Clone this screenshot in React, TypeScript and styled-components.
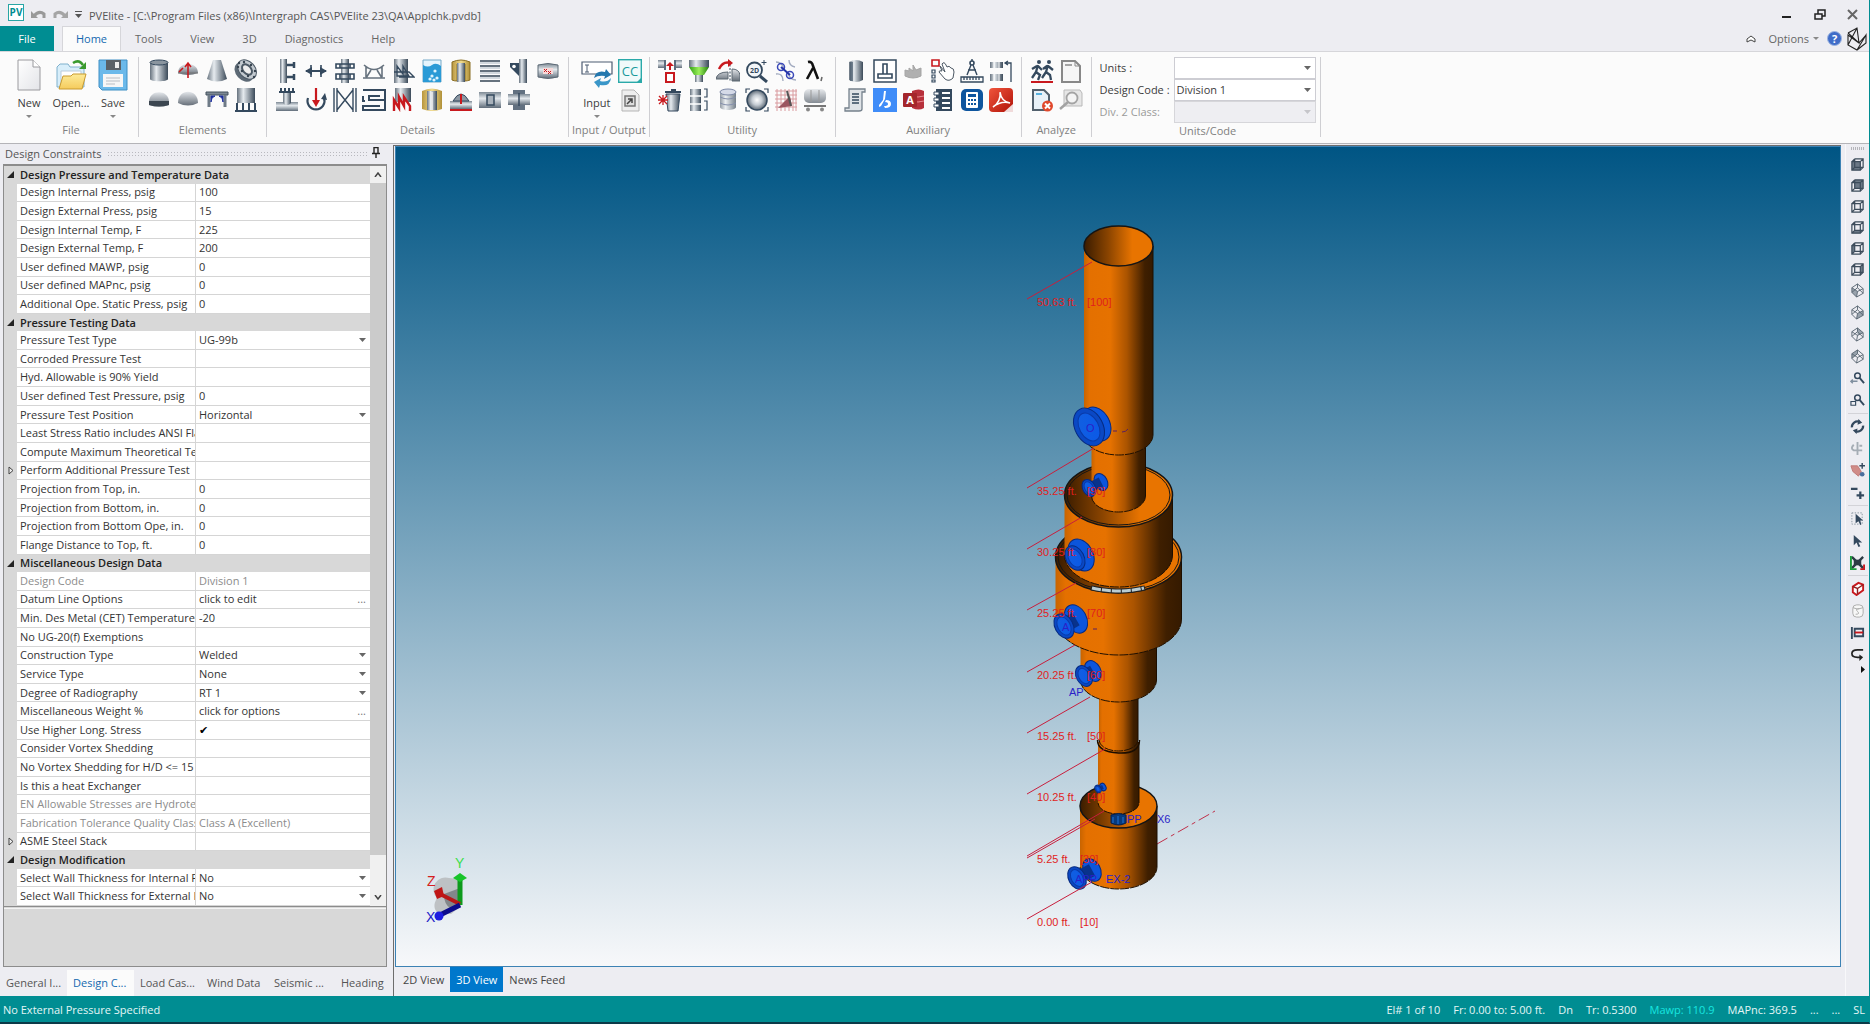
import React from "react";
import styled, { createGlobalStyle, css } from "styled-components";

const SLATE = "#34495e";
const RED = "#c8191e";
const TEAL = "#008d92";

const GlobalStyle = createGlobalStyle`
  *, *::before, *::after { box-sizing: border-box; }
  html, body, #root { height: 100%; margin: 0; }
  body { background: #ededf2; overflow: hidden; }
  body, button, input, select {
    font-family: "Open Sans", "Noto Sans", sans-serif;
    font-size: 11px;
    line-height: 16px;
    color: #3c3c3c;
  }
  button, select, input { border: 0; padding: 0; margin: 0; background: none; }
  svg { display: block; flex: none; }
`;

/* ---------- frame ---------- */

const Window = styled.div`
  display: flex;
  flex-direction: column;
  height: 100%;
  border-right: 1px solid ${TEAL};
  border-bottom: 2px solid #0c3a48;
`;

const TitleBar = styled.header`
  display: flex;
  align-items: center;
  height: 26px;
  padding: 6px 10px 0 8px;
  gap: 7px;
`;

const Logo = styled.span`
  width: 16px;
  height: 17px;
  border: 1px solid #28a5a5;
  background: #fff;
  color: #008d92;
  font-size: 10px;
  font-weight: 700;
  line-height: 14px;
  text-align: center;
  margin-top: -8px;
`;

const QuickButton = styled.button`
  display: flex;
  margin-top: -4px;
`;

const Title = styled.h1`
  flex: 1;
  margin: 0;
  font-size: 11px;
  font-weight: 400;
  color: #555;
  white-space: nowrap;
`;

const WindowButtons = styled.div`
  display: flex;
  gap: 21px;
`;

const TabBar = styled.nav`
  display: flex;
  align-items: stretch;
  height: 25px;
  padding-right: 1px;
`;

const MenuTab = styled.button<{ $kind?: "file" | "active" }>`
  height: 25px;
  padding: 1px 14px 0;
  color: #666;
  ${p => p.$kind === "file" && css`
    width: 54px;
    margin-right: 8px;
    background: ${TEAL};
    color: #fff;
  `}
  ${p => p.$kind === "active" && css`
    width: 59px;
    padding: 0 12px;
    background: #fbfbfb;
    border: 1px solid #d6d6da;
    border-bottom: 0;
    color: #1369b0;
  `}
`;

const TabBarEnd = styled.div`
  display: flex;
  align-items: center;
  gap: 8px;
  margin-left: auto;
`;

const EndButton = styled.button<{ $wide?: boolean }>`
  display: flex;
  align-items: center;
  gap: 4px;
  color: #666;
  ${p => p.$wide && css`padding-left: 4px;`}
`;

/* ---------- ribbon ---------- */

const Ribbon = styled.div`
  display: flex;
  height: 93px;
  padding: 5px 0 6px;
  background: #fbfbfb;
  border-top: 1px solid #d6d6da;
  border-bottom: 1px solid #b4b4b8;
`;

const Group = styled.section<{ $pad?: string }>`
  display: flex;
  flex-direction: column;
  justify-content: space-between;
  padding: ${p => p.$pad ?? "0 8px"};
  border-right: 1px solid #cfcfd3;
`;

const GroupBody = styled.div`
  display: flex;
  padding-top: 2px;
  justify-content: center;
`;

const GroupLabel = styled.h2`
  margin: 0;
  font-size: 11px;
  font-weight: 400;
  line-height: 15px;
  color: #808080;
  text-align: center;
  white-space: nowrap;
`;

const IconGrid = styled.div<{ $cols: number }>`
  display: grid;
  grid-template-columns: repeat(${p => p.$cols}, 24px);
  grid-auto-rows: 24px;
  gap: 5px;
`;

const IconButton = styled.button`
  display: flex;
  width: 24px;
  height: 24px;
`;

const BigButton = styled.button`
  display: flex;
  flex-direction: column;
  align-items: center;
  width: 42px;
  gap: 4px;
`;

const CodeForm = styled.div`
  display: grid;
  grid-template-columns: 74px 142px;
  grid-auto-rows: 22px;
  align-items: center;
`;

const CodeLabel = styled.label<{ $off?: boolean }>`
  color: ${p => (p.$off ? "#9a9a9a" : "#3c3c3c")};
`;

const SelectBox = styled.span<{ $framed?: boolean; $off?: boolean }>`
  display: grid;
  align-items: center;
  ${p => p.$framed && css`
    height: 22px;
    border: 1px solid #cdcdd3;
    background: ${p.$off ? "#ececf1" : "#fff"};
    padding-left: 2px;
    opacity: ${p.$off ? 0.8 : 1};
  `}
  & > * { grid-area: 1 / 1; }
  & > svg { justify-self: end; margin-right: 4px; pointer-events: none; }
`;

const Select = styled.select`
  appearance: none;
  width: 100%;
  height: 16px;
  color: #3c3c3c;
  opacity: 1;
`;

/* ---------- body ---------- */

const Body = styled.div`
  display: flex;
  flex: 1;
  min-height: 0;
`;

const Side = styled.aside`
  display: flex;
  flex-direction: column;
  width: 388px;
  padding-right: 1px;
`;

const SideHeader = styled.div`
  display: flex;
  align-items: center;
  height: 20px;
  gap: 5px;
  padding: 0 7px 0 5px;
`;

const SideTitle = styled.h2`
  margin: 0;
  font-size: 11px;
  font-weight: 400;
  color: #555;
`;

const Grip = styled.span`
  flex: 1;
  height: 6px;
  background-image: radial-gradient(#b9b9bf 25%, transparent 30%);
  background-size: 3px 3px;
`;

const PropertyFrame = styled.div`
  display: flex;
  flex-direction: column;
  flex: 1;
  min-height: 0;
  margin-left: 3px;
  border: 1px solid #8c8c8c;
  border-top-width: 2px;
  background: #d8d8d8;
`;

const PropertyScroll = styled.div`
  display: flex;
  flex: 1;
  min-height: 0;
  border-bottom: 1px solid #8c8c8c;
`;

const TableArea = styled.div`
  flex: 1;
  min-width: 0;
`;

const Table = styled.table`
  width: 100%;
  height: 100%;
  border-spacing: 0;
  table-layout: fixed;
`;

const GutterCol = styled.col`width: 13px;`;
const NameCol = styled.col`width: 179px;`;

const cell = css`
  padding: 0;
  line-height: 16px;
  overflow: hidden;
  white-space: nowrap;
`;

const Gutter = styled.td`
  ${cell}
  background: #d8d8d8;
  & svg { margin-left: auto; margin-right: 3px; }
`;

const SectionHead = styled.th`
  ${cell}
  padding-left: 3px;
  text-align: left;
  font-weight: 600;
  color: #222;
  background: #d8d8d8;
`;

const NameCell = styled.th<{ $off?: boolean }>`
  ${cell}
  padding-left: 3px;
  text-align: left;
  font-weight: 400;
  background: #fff;
  border-right: 1px solid #d5d5d5;
  border-bottom: 1px solid #d5d5d5;
  color: ${p => (p.$off ? "#8c8c8c" : "#333")};
`;

const ValueCell = styled.td<{ $off?: boolean }>`
  ${cell}
  padding-left: 3px;
  background: #fff;
  border-bottom: 1px solid #d5d5d5;
  & input, & select { color: ${p => (p.$off ? "#8c8c8c" : "#333")}; }
`;

const TextInput = styled.input`
  display: block;
  width: 100%;
  height: 16px;
`;

const Check = styled.input`
  appearance: none;
  display: block;
  width: 14px;
  height: 14px;
  line-height: 14px;
  &:checked::before {
    content: "✔";
    font-family: "DejaVu Sans", sans-serif;
    font-size: 11px;
    color: #000;
  }
`;

const Picker = styled.span`
  display: flex;
  justify-content: space-between;
  padding-right: 4px;
`;

const Dots = styled.button`color: #777;`;

const Scrollbar = styled.div`
  display: flex;
  flex-direction: column;
  width: 16px;
  background: #f0f0f0;
`;

const ScrollButton = styled.button`
  display: flex;
  align-items: center;
  justify-content: center;
  height: 17px;
`;

const ScrollTrack = styled.div`
  flex: 1;
  display: grid;
  grid-template-rows: 20fr 1fr;
`;

const Thumb = styled.div`background: #cbcbcb;`;

const Description = styled.div`
  height: 58px;
  margin-top: 1px;
  border-top: 1px solid #f4f4f4;
`;

const SideTabs = styled.div`
  display: flex;
  height: 29px;
  padding-top: 3px;
`;

const SideTab = styled.button<{ $active?: boolean }>`
  flex: 0 0 67px;
  height: 26px;
  padding-left: 6px;
  text-align: left;
  white-space: nowrap;
  color: ${p => (p.$active ? "#1369b0" : "#555")};
  background: ${p => (p.$active ? "#fbfbfb" : "transparent")};
  &:last-child { flex: 1 1 0; }
`;

const Main = styled.main`
  display: flex;
  flex-direction: column;
  flex: 1;
  min-width: 0;
  margin: 1px 4px 0 5px;
  border-left: 1px solid #6d6d6d;
  border-top: 1px solid #6d6d6d;
`;

const Viewport = styled.div`
  position: relative;
  display: flex;
  align-items: center;
  justify-content: center;
  flex: 1;
  min-height: 0;
  border: 1px solid #3c82b4;
  margin-left: 1px;
  background: linear-gradient(#005584, #f7f8fa);
`;

const Triad = styled.svg`
  position: absolute;
  left: 30px;
  bottom: 42px;
`;

const ViewTabs = styled.div`
  display: flex;
  height: 29px;
  padding: 0 0 4px 3px;
`;

const ViewTab = styled.button<{ $active?: boolean }>`
  padding: 0 6px;
  color: ${p => (p.$active ? "#fff" : "#444")};
  background: ${p => (p.$active ? "#0078cc" : "transparent")};
`;

const Tools = styled.div`
  display: flex;
  flex-direction: column;
  align-items: center;
  width: 24px;
  padding-top: 3px;
  border-left: 1px solid #f8f8fa;
`;

const ToolGrip = styled.span`
  width: 14px;
  height: 3px;
  margin-bottom: 4px;
  background: repeating-linear-gradient(90deg, #b5b5ba 0 1px, transparent 1px 2px);
`;

const ToolButton = styled.button`
  display: flex;
  justify-content: center;
  align-items: center;
  width: 22px;
  height: 21px;
  &:nth-of-type(n + 7) { margin-bottom: 1px; }
`;

const ToolRule = styled.hr`
  width: 20px;
  height: 1px;
  margin: 1px 0 2px;
  border: 0;
  background: #d3d3d8;
`;

const StatusBar = styled.footer`
  display: flex;
  align-items: center;
  height: 26px;
  padding: 2px 4px 0 3px;
  gap: 13px;
  background: ${TEAL};
  color: #e4f6f6;
  white-space: nowrap;
`;

const StatusMain = styled.span`flex: 1;`;
const StatusItem = styled.span<{ $accent?: boolean }>`
  color: ${p => (p.$accent ? "#17e6e0" : "inherit")};
`;

const Defs = styled.svg`position: absolute;`;

/* ---------- shared gradients ---------- */

function Gradients() {
  return (
    <Defs width="0" height="0" aria-hidden="true">
      <defs>
        <linearGradient id="steel"><stop offset="0" stopColor="#66727e" /><stop offset=".35" stopColor="#e6ebef" /><stop offset="1" stopColor="#3b4a59" /></linearGradient>
        <linearGradient id="steelV" x2="0" y2="1"><stop offset="0" stopColor="#7d8994" /><stop offset=".4" stopColor="#e4e9ed" /><stop offset="1" stopColor="#5f6c79" /></linearGradient>
        <linearGradient id="dome" x2="0" y2="1"><stop offset="0" stopColor="#e3e6ea" /><stop offset="1" stopColor="#666f79" /></linearGradient>
        <radialGradient id="ball"><stop offset="0" stopColor="#fff" /><stop offset=".5" stopColor="#c5ccd3" /><stop offset="1" stopColor="#5b6773" /></radialGradient>
        <linearGradient id="paper" x2="1" y2="1"><stop offset="0" stopColor="#fff" /><stop offset="1" stopColor="#e3e4e8" /></linearGradient>
        <linearGradient id="gold" x2="0" y2="1"><stop offset="0" stopColor="#fdeb9a" /><stop offset="1" stopColor="#f5cb5c" /></linearGradient>
        <linearGradient id="brass"><stop offset="0" stopColor="#b8963f" /><stop offset=".5" stopColor="#f2dc8e" /><stop offset="1" stopColor="#b09038" /></linearGradient>
        <linearGradient id="green"><stop offset="0" stopColor="#2f9e14" /><stop offset=".5" stopColor="#9cf05a" /><stop offset="1" stopColor="#237d10" /></linearGradient>
        <linearGradient id="redPdf" x2="1" y2="1"><stop offset="0" stopColor="#f0553c" /><stop offset="1" stopColor="#b01208" /></linearGradient>
        <linearGradient id="shell"><stop offset="0" stopColor="#c86400" /><stop offset=".08" stopColor="#e47000" /><stop offset=".38" stopColor="#e67200" /><stop offset=".62" stopColor="#ab5400" /><stop offset=".88" stopColor="#3f1f00" /><stop offset="1" stopColor="#351a00" /></linearGradient>
        <linearGradient id="bore"><stop offset="0" stopColor="#3a1c00" /><stop offset=".35" stopColor="#8a4400" /><stop offset=".7" stopColor="#e87400" /><stop offset="1" stopColor="#e87400" /></linearGradient>
        <linearGradient id="flange" x2="1" y2="1"><stop offset="0" stopColor="#1260e0" /><stop offset="1" stopColor="#0a58e8" /></linearGradient>
      </defs>
    </Defs>
  );
}

/* ---------- ribbon icons (24 x 24) ---------- */

const S = { fill: "none", stroke: SLATE, strokeWidth: 1.6 };
const tag = { fontFamily: "Open Sans, sans-serif" };

const ICONS: Record<string, React.ReactNode> = {
  Cylinder: <><path d="M3 4v16c0 3 18 3 18 0V4z" fill="url(#steel)" /><ellipse cx="12" cy="3.5" rx="9" ry="2.5" fill="#8a959f" stroke={SLATE} /></>,
  "Elliptical head": <><path d="M2 14C2 2 22 2 22 14q-10 4-20 0z" fill="url(#dome)" /><path d="M2 14h20" stroke="#777" /><path d="M12 19V5M9 8l3-4 3 4M3 13l4-4" fill="none" stroke={RED} strokeWidth="1.6" /></>,
  Cone: <path d="M8 1h8l6 19q-10 5-20 0z" fill="url(#steel)" />,
  Flange: <><ellipse cx="10" cy="13" rx="8" ry="11" transform="rotate(-42 10 13)" fill="#5d6a76" /><ellipse cx="13" cy="10.500" rx="8" ry="11" transform="rotate(-42 13 10.5)" fill="#c3cad0" stroke="#4d5a66" /><ellipse cx="13" cy="10.500" rx="4" ry="6" transform="rotate(-42 13 10.5)" fill="#eee" stroke="#4d5a66" strokeWidth="2" />{[[5, 4], [10, 3], [17, 6], [21, 12], [20, 18], [14, 17], [8, 12], [4, 8]].map(([x, y]) => <circle key={x} cx={x} cy={y} r="1.200" fill="#36434f" />)}</>,
  "Torispherical head": <><path d="M2 14C2 1 22 1 22 14v3q-10 3-20 0z" fill="url(#dome)" /><path d="M2 13h20v4q-10 3-20 0z" fill="#3c4650" /></>,
  "Spherical head": <path d="M2 15C2 0 22 0 22 15q-10 5-20 0z" fill="url(#dome)" />,
  "Flat head": <><path d="M1 4h22v3H1z" fill="#7d8893" stroke="#45525f" /><path d="M4 7v12M20 7v12" stroke="#6f7b87" strokeWidth="3" /><path d="M6 8h4q-4 1-4 6zM18 8h-4q4 1 4 6z" fill="#1d2f9c" stroke="#1d2f9c" /></>,
  Skirt: <><path d="M3 0h18v15H3z" fill="url(#steel)" /><path d="M3 15v7M9 15v7M15 15v7M21 15v7M1 23h22" stroke={SLATE} strokeWidth="2" /></>,

  Ring: <><path d="M5 0h7v24H5z" fill="url(#steel)" /><path d="M12 6h7M12 18h7M19 3v6M19 15v6" stroke={SLATE} strokeWidth="2.500" /></>,
  Clip: <><path d="M2 12h20" stroke={SLATE} strokeWidth="2" /><path d="M7 6v12M17 6v12" stroke={SLATE} strokeWidth="1.600" /><path d="M1 12l7-4v8zM23 12l-7-4v8z" fill={SLATE} /></>,
  Platform: <><path d="M8 0h8v24H8z" fill="url(#steel)" /><path d="M3 5h18v4H3zM3 15h18v5H3zM7 5v4M17 5v4M7 15v5M17 15v5" {...S} /></>,
  Saddle: <><path d="M2 6q10 9 20 0M4 8v10M20 8v10M1 19h22M9 11l-5 8M15 11l5 8" fill="none" stroke="#66727e" strokeWidth="1.600" /></>,
  Tray: <><path d="M3 0h14v24H3z" fill="url(#steel)" /><path d="M6 17V7l6 8V7l6 10zM3 13h15l5 5H8" {...S} strokeWidth="1.300" /></>,
  Liquid: <><path d="M3 1v22h18V1z" fill="#e5f4fd" stroke="#74a9c8" /><path d="M3 6q5 3 9 0t9 1v16H3z" fill="#2a9ad6" />{[[12, 17], [15, 12], [10, 20], [17, 19], [14, 21]].map(([x, y]) => <circle key={y} cx={x} cy={y} r="1.600" fill="#dff3fd" />)}</>,
  Insulation: <><path d="M3 3q9-4 18 0v18q-3 1-5 1V5H8v17q-3 0-5-1z" fill="url(#brass)" stroke="#8a6e24" /><path d="M8 4h8v19H8z" fill="url(#steel)" /></>,
  Lining: <><path d="M2 2h20M2 7h20M2 12h20M2 17h20M2 22h20" stroke="#66727e" strokeWidth="2" /><path d="M2 4h20M2 9h20M2 14h20M2 19h20" stroke="#d3d9de" strokeWidth="2" /></>,
  Lug: <><path d="M12 0h8v24h-8z" fill="url(#steel)" /><path d="M12 4H3v4l9 9z" fill={SLATE} /><circle cx="7" cy="7.500" r="1.800" fill="#fff" /></>,
  "Half pipe": <><path d="M2 6q10-3 20 0v12q-10 3-20 0z" fill="url(#steelV)" stroke="#5d6a76" /><path d="M7 9h10v6H7z" fill="#f6dada" /><path d="M8 10l3 3m0-3l-3 3m4-1l3 3m0-3l-3 3" stroke={RED} /></>,
  Nozzle: <><path d="M1 14h22v9H1z" fill="url(#steelV)" /><path d="M8 3h8v12q-4 4-8 0z" fill="url(#steel)" /><path d="M4 4h16M6 0v4M10 0v4M14 0v4M18 0v4" stroke={SLATE} strokeWidth="2" /></>,
  "Forces and moments": <><path d="M4 10a8.500 8.500 0 1 0 16 0" {...S} strokeWidth="2.200" /><path d="M21 5l2 7-6-1z" fill={SLATE} /><path d="M12 0v14" stroke={RED} strokeWidth="2.200" /><path d="M8 12h8l-4 7z" fill={RED} /></>,
  Weight: <path d="M1 0v24M4 0v24M20 0v24M23 0v24M4 2l16 20M20 2L4 22" {...S} strokeWidth="1.400" />,
  "Tube bundle": <path d="M1 2h22v20H1v-4h17M23 12H7v-4h11M1 8v5h2" {...S} strokeWidth="2" />,
  Packing: <><path d="M4 0h16v14H4z" fill="url(#steel)" /><path d="M3 23V12l5 8V9l5 9V9l6 9v5" fill="none" stroke={RED} strokeWidth="2.400" /></>,
  Jacket: <><path d="M2 3q10-5 20 0v18q-10 4-20 0z" fill="url(#brass)" /><path d="M7 3h10v19H7z" fill="url(#steel)" /><path d="M12 4v18" stroke="#eee" strokeWidth="1.500" /></>,
  "Reinforcing pad": <><path d="M1 13h22v8H1z" fill="url(#steelV)" /><path d="M4 13q8-14 16 0z" fill="#8d98a3" stroke={SLATE} /><path d="M12 6v10" stroke={RED} strokeWidth="2" /><path d="M1 21h22v2H1z" fill={RED} /></>,
  Opening: <><path d="M1 4h22v16H1z" fill="url(#steelV)" /><path d="M9 7h7v10H9z" fill="#a8b1ba" stroke={SLATE} strokeWidth="1.500" /></>,
  Stiffener: <><path d="M1 6h22v11H1z" fill="url(#steelV)" /><path d="M6 2h12v4H6zM6 17h12v5H6z" fill="#617080" /><path d="M12 5v13" stroke={SLATE} strokeWidth="1.500" /></>,

  "Component calculator": <><rect x=".7" y=".7" width="22.600" height="22.600" fill="#f0fafa" stroke="#2aa9a9" strokeWidth="1.400" /><text x="12" y="17" textAnchor="middle" fontSize="13" fill="#199a9c" {...tag}>CC</text><path d="M24 18v6h-6z" fill="#2aa9a9" /></>,
  "Export drawing": <><path d="M4 2h12l5 5v16H4z" fill="#eee" stroke="#b5b5b5" /><path d="M7 8h10v10H7z" fill="#ddd" stroke="#777" strokeWidth="1.500" /><path d="M9 16l5-5M10 11h4v4" stroke="#444" fill="none" strokeWidth="1.500" /></>,

  Insert: <><path d="M0 1h6v8H0zM18 1h6v8h-6z" fill="url(#steelV)" /><path d="M7 1v10M17 1v10" stroke={SLATE} strokeWidth="1.600" /><path d="M8 14h8v9H8z" fill="#fff" stroke={RED} strokeWidth="2" /><path d="M12 3l4 4h-3v4h-2V7H8z" fill={RED} /></>,
  Share: <><path d="M2 1h20v7H2z" fill="url(#steel)" /><path d="M2 8h20l-5 8H7z" fill="url(#green)" /><path d="M8 16h8v7H8z" fill="url(#steel)" /></>,
  Flip: <><path d="M0 20q1-7 12-7v7zM16 10q7 0 8 6v6h-8z" fill="url(#dome)" stroke="#5c6873" /><path d="M14 2v20" stroke={SLATE} strokeDasharray="2 1.500" /><path d="M3 10q4-8 11-6" fill="none" stroke={RED} strokeWidth="2.500" /><path d="M12 0l5 4-5 4z" fill={RED} /></>,
  "Zoom 2D": <><circle cx="9.500" cy="11" r="7.500" fill="#f2f5f8" stroke={SLATE} strokeWidth="1.800" /><path d="M15 17l7 6" stroke={SLATE} strokeWidth="3" /><text x="5" y="14" fontSize="7" fontWeight="700" fill={SLATE} {...tag}>2D</text><path d="M19 1v5M16.500 3.500h5" stroke={SLATE} /></>,
  Connect: <><path d="M2 3q6 0 8 7M22 21q-6 0-8-7M15 1q0 6 6 7M2 15q7-1 7 7" fill="none" stroke="#a2abc0" strokeWidth="1.400" /><circle cx="7" cy="8" r="3.500" fill="none" stroke="#3a48b8" strokeWidth="1.500" /><circle cx="16" cy="16" r="3.500" fill="none" stroke="#3a48b8" strokeWidth="1.500" /><path d="M7 8l9 8" stroke="#2333a8" strokeWidth="2" /></>,
  Lambda: <><path d="M5 3q4-1 5 4l5 13M10 9L4 20" fill="none" stroke="#111" strokeWidth="2.600" /><path d="M19 18l-1 4" stroke="#666" strokeWidth="1.500" /></>,
  Delete: <><path d="M8 6h14l-2 17H10z" fill="url(#steel)" stroke={SLATE} /><path d="M7 4h16M13 2h5" stroke={SLATE} strokeWidth="2" /><path d="M1 8h8v8H1z" fill="#fff" /><path d="M1 8l8 8M9 8l-8 8M5 7v10M0 12h10" stroke={RED} strokeWidth="1.300" /></>,
  Sections: <><path d="M3 1h11v22H3z" fill="url(#steel)" /><path d="M3 8h11M3 16h11" stroke="#fff" strokeWidth="1.500" /><path d="M17 1h3v8h-3M17 13h3v9h-3" {...S} strokeWidth="1.200" /></>,
  Tank: <><path d="M4 4v15c0 4 16 4 16 0V4z" fill="url(#steel)" opacity=".7" /><ellipse cx="12" cy="4" rx="8" ry="3" fill="#d5dae8" stroke="#7c88a6" /><path d="M4 9q8 4 16 0M4 15q8 4 16 0" fill="none" stroke="#8590ac" /></>,
  Sphere: <><circle cx="12" cy="12" r="10" fill="url(#ball)" stroke={SLATE} strokeWidth="1.500" /><path d="M1 5V1h4M19 1h4v4M23 19v4h-4M5 23H1v-4" {...S} strokeWidth="1.200" /></>,
  Mesh: <><path d="M1 3h22M1 7h22M1 11h22M1 15h22M1 19h22M3 1v22M7 1v22M11 1v22M15 1v22M19 1v22M22 1v22" stroke="#d99a9e" /><path d="M4 20l12-12 2 10z" fill="#9b5560" /><path d="M13 3l4 15" stroke="#555" strokeWidth="2" /></>,
  "Rail car": <><rect x="1" y="1" width="22" height="14" rx="5" fill="url(#dome)" opacity=".8" /><path d="M8 2v12M16 2v12" stroke="#999" /><path d="M1 18h22" stroke="#777" strokeWidth="2" /><circle cx="5" cy="21.500" r="2" fill="#888" /><circle cx="19" cy="21.500" r="2" fill="#888" /></>,

  "Vertical vessel": <><path d="M5 3q7-4 14 0v18q-7 4-14 0z" fill="url(#steel)" /><path d="M6 3h3v19H6z" fill={SLATE} opacity=".6" /></>,
  Foundation: <><rect x="1" y="1" width="22" height="22" fill="#fff" stroke={SLATE} strokeWidth="1.500" /><path d="M10 5h4v10h-4zM5 15h14v4H5z" {...S} /></>,
  "Wind profile": <path d="M3 17V11l4 1V9l4 3V6l3 5 5-2v8q-8 4-16 0z" fill="#b0b0b0" stroke="#a5a5a5" />,
  Select: <><path d="M1 1h7v6H1z" fill="none" stroke={RED} strokeWidth="1.600" /><path d="M1 11h3v3H1zM1 16h3v3H1zM1 21h3v2H1z" {...S} strokeWidth="1.200" /><path d="M9 7l5 6-3-8q2-3 4 1l1 2q2-2 4 1 3 0 3 4l-1 6q-4 4-8 1l-6-7q0-2 3-1z" fill="#fff" stroke="#4c5864" /></>,
  Compass: <><path d="M1 18h22v5H1zM4 18v3M7 18v3M10 18v3M13 18v3M16 18v3M19 18v3" {...S} strokeWidth="1.300" /><circle cx="12" cy="4" r="2" {...S} /><path d="M11 6L7 16M13 6l4 10M8 11h8M12 0v2" {...S} strokeWidth="1.400" /></>,
  Dimensions: <><path d="M1 3h13v6H1zM1 15h13v7H1z" fill="url(#steel)" /><path d="M5 3v6M10 3v6M5 15v7M10 15v7" stroke="#fff" /><path d="M17 4h5v19M19 2l-3 2 3 2" {...S} strokeWidth="1.300" /></>,
  Report: <><path d="M5 1h16v3h-3v17q0 2-3 2H1v-3h4z" fill="#dfe3e7" stroke="#75818c" strokeWidth="1.300" /><path d="M8 6h7M8 9h7M8 12h7M8 15h7" stroke={SLATE} strokeWidth="1.500" /></>,
  Bing: <><rect width="24" height="24" fill="#3f8cf8" /><path d="M11 3h2l-1 8-4 7-2 1v-2l4-5zM13 12q5 0 5 4t-6 4l-1-2q4 0 4-2t-3-2z" fill="#fff" /></>,
  Access: <><path d="M10 3q7-3 12 0v17q-5 3-12 0z" fill="#b7303b" /><path d="M10 8q6 2 12 0M10 13q6 2 12 0" fill="none" stroke="#e8888e" /><rect x="1" y="5" width="14" height="14" rx="1" fill="#a4262c" /><text x="8" y="16" textAnchor="middle" fontSize="11" fontWeight="700" fill="#fff" {...tag}>A</text></>,
  Database: <><path d="M5 1h16v22H5z" fill={SLATE} /><path d="M11 5h8M11 10h8M11 15h8M11 20h8" stroke="#fff" strokeWidth="2" /><path d="M3 4h5v3H3zM3 10h5v3H3zM3 16h5v3H3z" fill="#fff" stroke={SLATE} /></>,
  Calculator: <><rect x="1" y="1" width="22" height="22" rx="5" fill="#0e559e" /><rect x="6" y="4" width="12" height="16" rx="1" fill="#fff" /><path d="M8 6h8v3H8zM8 11h2v2H8zM11 11h2v2h-2zM14 11h2v2h-2zM8 15h2v2H8zM11 15h2v2h-2zM14 15h2v2h-2z" fill="#0e559e" /></>,
  Acrobat: <><rect width="24" height="24" rx="4" fill="url(#redPdf)" /><path d="M4 19c5-3 8-9 7-15 1 7 4 10 10 11-6-2-12 0-17 4z" fill="none" stroke="#fff" strokeWidth="1.500" /><path d="M24 16v8h-9z" fill="#f0dada" /></>,

  Run: <><circle cx="9" cy="3" r="2" fill={SLATE} /><circle cx="19" cy="3" r="2" fill={SLATE} /><path d="M8 6l-2 7 4 3-2 5M6 13l-4 6M7 7l-5 3M8 7l4 4M18 6l-2 7 4 3 1 5M16 13l-4 6M17 7l-4 3M18 7l5 4" fill="none" stroke={SLATE} strokeWidth="2.300" /><path d="M1 22h22v2H1z" fill={RED} /></>,
  "Error check": <><path d="M3 2h13l5 5v16H3z" fill="#f6f6f6" stroke="#888" strokeWidth="2" /><path d="M16 2v5h5" fill="none" stroke="#888" /><path d="M6 6h7" stroke="#888" strokeWidth="1.500" /></>,
  "Cancel run": <><path d="M3 2h11l5 5v15H3z" fill="#e8f1f8" stroke="#52606d" strokeWidth="2" /><path d="M6 6h6" stroke="#34a0d8" strokeWidth="1.600" /><circle cx="17.500" cy="18" r="5.500" fill="#e0482c" /><path d="M15 15.500l5 5M20 15.500l-5 5" stroke="#fff" strokeWidth="2" /></>,
  Preview: <><path d="M5 2h16l2 3v13H5z" fill="#e6e6e6" stroke="#b9b9b9" /><circle cx="13" cy="10" r="5.500" fill="#f4f4f4" stroke="#a3a3a3" strokeWidth="1.800" /><path d="M9 14l-8 7" stroke="#a3a3a3" strokeWidth="2.500" /></>,
};

const ELEMENTS = ["Cylinder", "Elliptical head", "Cone", "Flange", "Torispherical head", "Spherical head", "Flat head", "Skirt"];
const DETAILS = ["Ring", "Clip", "Platform", "Saddle", "Tray", "Liquid", "Insulation", "Lining", "Lug", "Half pipe", "Nozzle", "Forces and moments", "Weight", "Tube bundle", "Packing", "Jacket", "Reinforcing pad", "Opening", "Stiffener"];
const UTILITY = ["Insert", "Share", "Flip", "Zoom 2D", "Connect", "Lambda", "Delete", "Sections", "Tank", "Sphere", "Mesh", "Rail car"];
const AUXILIARY = ["Vertical vessel", "Foundation", "Wind profile", "Select", "Compass", "Dimensions", "Report", "Bing", "Access", "Database", "Calculator", "Acrobat"];
const ANALYZE = ["Run", "Error check", "Cancel run", "Preview"];

function Icons({ names, cols }: { names: string[]; cols: number }) {
  return (
    <IconGrid $cols={cols}>
      {names.map(n => (
        <IconButton key={n} aria-label={n}><svg width="24" height="24" viewBox="0 0 24 24">{ICONS[n]}</svg></IconButton>
      ))}
    </IconGrid>
  );
}

function Caret({ color = "#666" }: { color?: string }) {
  return <svg width="7" height="4" viewBox="0 0 7 4"><path d="M0 0h7L3.500 4z" fill={color} /></svg>;
}

function SmallCaret() {
  return <svg width="6" height="3" viewBox="0 0 6 3"><path d="M0 0h6L3 3z" fill="#888" /></svg>;
}

const BIG: Record<string, React.ReactNode> = {
  New: <><path d="M5 1h15l7 7v23H5z" fill="url(#paper)" stroke="#9a9a9e" /><path d="M20 1v7h7" fill="#fff" stroke="#9a9a9e" /></>,
  "Open...": <><path d="M2 8l3-3h8l2 3h14v20H2z" fill="#d8eefa" stroke="#7fb0cc" /><path d="M6 12h20v14H6z" fill="#fff" stroke="#bcd" /><path d="M4 30l4-13h8l2-2h13l-4 15z" fill="url(#gold)" stroke="#c99a2e" /><path d="M18 4q6-4 10 2" fill="none" stroke="#3a9a2e" strokeWidth="2.500" /><path d="M31 3v7h-7z" fill="#3a9a2e" /></>,
  Save: <><path d="M2 1h28v30H5l-3-3z" fill="#6bb9ea" stroke="#3f8fc4" /><path d="M9 1h15v10H9z" fill="#5a6167" /><path d="M18 3h4v6h-4z" fill="#eee" /><path d="M6 15h20v13H6z" fill="#f6f6f6" /><path d="M9 19h14M9 22h14M9 25h9" stroke="#b9bec4" /></>,
  Input: <><path d="M1 3h30v12H1z" fill="#fff" stroke="#4d5c72" strokeWidth="1.200" /><path d="M4 6h4M6 6v7M4 13h4" stroke="#4d5c72" fill="none" /><path d="M13 19q2-8 11-6l1-3 5 6-7 4 1-3q-7-1-11 2z" fill="#2478ae" /><path d="M30 19q-1 9-11 7l-1 3-5-6 7-4-1 3q7 2 11-3z" fill="#3a96c8" /></>,
};

function Big({ name, caret }: { name: string; caret?: boolean }) {
  return (
    <BigButton>
      <svg width="32" height="32" viewBox="0 0 32 32">{BIG[name]}</svg>
      <span>{name}</span>
      {caret && <SmallCaret />}
    </BigButton>
  );
}

/* ---------- property data ---------- */

type Kind = "text" | "select" | "check" | "pick";
type Prop = { n: string; k: Kind; v?: string; off?: boolean; more?: boolean };
const t = (n: string, v: string, off = false): Prop => ({ n, k: "text", v, off });
const s = (n: string, v: string): Prop => ({ n, k: "select", v });
const c = (n: string, v = "", off = false): Prop => ({ n, k: "check", v, off });
const p = (n: string, v: string): Prop => ({ n, k: "pick", v });

const SECTIONS: { title: string; props: Prop[] }[] = [
  { title: "Design Pressure and Temperature Data", props: [
    t("Design Internal Press, psig", "100"), t("Design External Press, psig", "15"), t("Design Internal Temp, F", "225"),
    t("Design External Temp, F", "200"), t("User defined MAWP, psig", "0"), t("User defined MAPnc, psig", "0"),
    t("Additional Ope. Static Press, psig", "0"),
  ] },
  { title: "Pressure Testing Data", props: [
    s("Pressure Test Type", "UG-99b"), c("Corroded Pressure Test"), c("Hyd. Allowable is 90% Yield"),
    t("User defined Test Pressure, psig", "0"), s("Pressure Test Position", "Horizontal"),
    c("Least Stress Ratio includes ANSI Flange"), c("Compute Maximum Theoretical Test"),
    { n: "Perform Additional Pressure Test", k: "text", v: "", more: true },
    t("Projection from Top, in.", "0"), t("Projection from Bottom, in.", "0"), t("Projection from Bottom Ope, in.", "0"),
    t("Flange Distance to Top, ft.", "0"),
  ] },
  { title: "Miscellaneous Design Data", props: [
    t("Design Code", "Division 1", true), p("Datum Line Options", "click to edit"), t("Min. Des Metal (CET) Temperature", "-20"),
    c("No UG-20(f) Exemptions"), s("Construction Type", "Welded"), s("Service Type", "None"), s("Degree of Radiography", "RT 1"),
    p("Miscellaneous Weight %", "click for options"), c("Use Higher Long. Stress", "on"), c("Consider Vortex Shedding"),
    c("No Vortex Shedding for H/D <= 15"), c("Is this a heat Exchanger"), c("EN Allowable Stresses are Hydrotest", "", true),
    t("Fabrication Tolerance Quality Class", "Class A (Excellent)", true),
    { n: "ASME Steel Stack", k: "text", v: "", more: true },
  ] },
  { title: "Design Modification", props: [
    s("Select Wall Thickness for Internal Pressure", "No"), s("Select Wall Thickness for External Pressure", "No"),
  ] },
];

function Value({ item, id }: { item: Prop; id: string }) {
  if (item.k === "select") {
    return <SelectBox><Select id={id} defaultValue={item.v}><option>{item.v}</option></Select><Caret /></SelectBox>;
  }
  if (item.k === "check") return <Check id={id} type="checkbox" defaultChecked={item.v === "on"} disabled={item.off} />;
  if (item.k === "pick") return <Picker><TextInput id={id} defaultValue={item.v} /><Dots aria-label={item.n}>...</Dots></Picker>;
  return <TextInput id={id} defaultValue={item.v} disabled={item.off} />;
}

function PropertyTable() {
  return (
    <Table>
      <colgroup><GutterCol /><NameCol /><col /></colgroup>
      <tbody>
        {SECTIONS.map((sec, i) => (
          <React.Fragment key={sec.title}>
            <tr>
              <Gutter><svg width="7" height="7" viewBox="0 0 7 7"><path d="M7 0v7H0z" fill="#222" /></svg></Gutter>
              <SectionHead colSpan={2}>{sec.title}</SectionHead>
            </tr>
            {sec.props.map((item, j) => (
              <tr key={item.n}>
                <Gutter>{item.more && <svg width="6" height="9" viewBox="0 0 6 9"><path d="M1 1l4 3.500L1 8z" fill="#eee" stroke="#444" /></svg>}</Gutter>
                <NameCell scope="row" $off={item.off}><label htmlFor={`p${i}-${j}`}>{item.n}</label></NameCell>
                <ValueCell $off={item.off}><Value item={item} id={`p${i}-${j}`} /></ValueCell>
              </tr>
            ))}
          </React.Fragment>
        ))}
      </tbody>
    </Table>
  );
}

/* ---------- 3D model ---------- */

function Shell({ cx = 1118.5, rx, ry, top, bottom, open }: { cx?: number; rx: number; ry: number; top: number; bottom: number; open?: boolean }) {
  const d = `M${cx - rx} ${top}V${bottom}A${rx} ${ry} 0 0 0 ${cx + rx} ${bottom}V${top}`;
  return (
    <g>
      <path d={d} fill="url(#shell)" />
      <path d={`M${cx - rx} ${bottom}A${rx} ${ry} 0 0 0 ${cx + rx} ${bottom}`} fill="none" stroke="#201000" strokeDasharray="9 1" />
      <path d={`M${cx + rx} ${top}V${bottom}`} stroke="#1c0e00" />
      {open && <ellipse cx={cx} cy={top} rx={rx} ry={ry} fill="url(#bore)" stroke="#151515" strokeWidth="1.500" />}
    </g>
  );
}

/* A nozzle is a rear flange, a neck and a front flange seen at an angle. */
function Nozzle({ back, front, r, rb = r, tint = "#0a48c4" }: { back: [number, number]; front: [number, number]; r: number; rb?: number; tint?: string }) {
  const tilt = ([x, y]: [number, number]) => `translate(${x} ${y}) rotate(-28)`;
  return (
    <g stroke="#062a80">
      <ellipse rx={rb * 0.7} ry={rb} transform={tilt(back)} fill="#0c55dc" />
      <path d={`M${back[0]} ${back[1]}L${front[0]} ${front[1]}`} stroke="#08328c" strokeWidth={r * 1.1} />
      <ellipse rx={r * 0.7} ry={r} transform={tilt(front)} fill={tint} />
      <ellipse rx={r * 0.48} ry={r * 0.75} transform={tilt(front)} fill="url(#flange)" stroke="#0a3aa8" />
    </g>
  );
}

const ELEVATIONS: { y: number; ft: string; no: string; bx: number; to: [number, number] }[] = [
  { y: 299, ft: "50.63 ft.", no: "[100]", bx: 1087, to: [1092, 262] },
  { y: 488, ft: "35.25 ft.", no: "[90]", bx: 1087, to: [1094, 448] },
  { y: 549, ft: "30.25 ft.", no: "[80]", bx: 1087, to: [1082, 517] },
  { y: 610, ft: "25.25 ft.", no: "[70]", bx: 1087, to: [1076, 583] },
  { y: 672, ft: "20.25 ft.", no: "[60]", bx: 1087, to: [1075, 645] },
  { y: 733, ft: "15.25 ft.", no: "[50]", bx: 1087, to: [1090, 697] },
  { y: 794, ft: "10.25 ft.", no: "[40]", bx: 1087, to: [1105, 749] },
  { y: 856, ft: "5.25 ft.", no: "[30]", bx: 1080, to: [1104, 811] },
  { y: 919, ft: "0.00 ft.", no: "[10]", bx: 1080, to: [1092, 882] },
];

function Model() {
  return (
    <svg width="200" height="750" viewBox="1018 182 200 750" fontFamily="Liberation Sans, Arial, sans-serif" fontSize="11">
      <path d="M1157 844l58-33" stroke="#c0304a" strokeDasharray="12 4 4 4" />
      <Shell rx={38.5} ry={22} top={806} bottom={867} open />
      <Nozzle back={[1092, 870]} front={[1077, 878]} r={12} />
      <Shell rx={20.5} ry={11} top={742} bottom={803} />
      <path d="M1111 815q7.500-3 15 0v8q-7.500 4-15 0z" fill="#083a7c" stroke="#05204e" />
      <path d="M1113 817v6M1118 816v8M1123 817v6" stroke="#1e74d8" />
      <Shell rx={19.5} ry={11} top={690} bottom={740} />
      <path d="M1097.500 740q0 12 21 13t21-13" fill="none" stroke="#1a0d00" strokeWidth="1.500" />
      <Shell rx={38} ry={22} top={635} bottom={680} />
      <Nozzle back={[1093, 671]} front={[1084, 676]} r={11} />
      <Shell rx={63} ry={36} top={557} bottom={619} open />
      <ellipse cx="1118.500" cy="557" rx="60.500" ry="34" fill="none" stroke="#151515" />
      <path d="M1091 588q27 6 54 0" fill="none" stroke="#222" strokeWidth="5" />
      <path d="M1092 588q27 6 52 0" fill="none" stroke="#b9ccd2" strokeWidth="3" strokeDasharray="9 1" />
      <Nozzle back={[1076, 619]} front={[1064, 626]} r={13} rb={15} />
      <Shell rx={54} ry={32} top={495} bottom={555} open />
      <ellipse cx="1118.500" cy="495" rx="51.500" ry="30" fill="none" stroke="#151515" />
      <Nozzle back={[1081, 555]} front={[1075, 558]} r={13} rb={17} />
      <Shell rx={27} ry={16} top={440} bottom={496} />
      <Nozzle back={[1101, 482]} front={[1089, 488]} r={9} />
      <Shell rx={34.5} ry={20} top={246} bottom={435} open />
      <Nozzle back={[1097, 424]} front={[1089, 427]} r={20} rb={18} />
      <Nozzle back={[1103, 787]} front={[1098, 789]} r={4} tint="#0a78e0" />
      <path d="M1113 431h4M1122 432q4 0 6-3M1093 629h4" stroke="#5a2060" fill="none" />
      {ELEVATIONS.map(e => (
        <g key={e.ft} fill="#e01e1e">
          <path d={`M1027 ${e.y}L${e.to[0]} ${e.to[1]}`} stroke="#c81e3c" />
          <text x="1037" y={e.y + 7}>{e.ft}</text>
          <text x={e.bx} y={e.y + 7}>{e.no}</text>
        </g>
      ))}
      <path d="M1027 858L1095 819" stroke="#c81e3c" />
      <g fill="#2a1fc8">
        <text x="1069" y="696">AP</text>
        <text x="1062" y="631">A</text>
        <text x="1086" y="432">O</text>
        <text x="1127" y="823">PP</text>
        <text x="1157" y="823">X6</text>
        <text x="1075" y="883">APP</text>
        <text x="1106" y="883">EX-2</text>
      </g>
    </svg>
  );
}

function AxisTriad() {
  return (
    <Triad width="46" height="68" viewBox="0 0 46 68" fontFamily="Liberation Sans, Arial, sans-serif" fontSize="14">
      <path d="M11 42a12 12 0 0 1 12-20q10 0 12 8v20l-10 8H13q-8-6-2-16z" fill="#b9bcbf" opacity=".9" />
      <path d="M18 38l16-6v18l-10 2q-6-4-6-14z" fill="#83878b" />
      <path d="M34 49V24" stroke="#0d9a1c" strokeWidth="5" /><path d="M34 17l7 5-7 4-7-4z" fill="#17c42a" />
      <path d="M34 48L14 38" stroke="#b81818" strokeWidth="4" /><path d="M16 31l-8 4 3 8 7-3z" fill="#c01616" />
      <path d="M34 49L14 59" stroke="#0c0c8c" strokeWidth="5" /><circle cx="13" cy="60" r="4.500" fill="#1c1ce0" />
      <text x="29" y="12" fill="#3adf4c">Y</text>
      <text x="1" y="30" fill="#d42020">Z</text>
      <text x="0" y="66" fill="#2020c8">X</text>
    </Triad>
  );
}

/* ---------- right tool strip (16 x 16) ---------- */

const cube = (fill: string) => <><path d={fill} fill="#6a7785" /><path d="M2 5h9v9H2zM5 2h9v9h-3M2 5l3-3M11 5l3-3M11 14l3-3M5 2v9h6M5 11l-3 3" fill="none" stroke="#3d4c5b" strokeWidth="1.300" /></>;
const iso = (fill: string) => <><path d={fill} fill="#98a2ac" /><path d="M8 1l6 5v5l-7 4-5-5V5zM2 5l6 4 6-3M8 9l-1 6M8 1v4M2 10l6-5 6 6" fill="none" stroke="#5b6773" /></>;

const TOOLS: ([string, React.ReactNode] | null)[] = [
  ["Front view", cube("M2 5h9v9H2z")], ["Back view", cube("M5 2h9v9H5z")], ["Top view", cube("")], ["Bottom view", cube("M2 14l3-3h9l-3 3z")],
  ["Left view", cube("M2 5l3-3v9l-3 3z")], ["Right view", cube("M11 5l3-3v9l-3 3z")],
  ["Isometric 1", iso("M2 5l6 4-1 6-5-5z")], ["Isometric 2", iso("M8 9l6-3v5l-7 4z")], ["Isometric 3", iso("M8 1l6 5-6 3z")], ["Isometric 4", iso("M8 1v4l-6 5V5z")],
  ["Zoom extents", <><circle cx="8" cy="5" r="3" {...S} /><path d="M10 7l5 6" {...S} strokeWidth="2" /><path d="M1 11h7M3 9l-2 2 2 2" fill="none" stroke="#8090a0" strokeWidth="1.600" /></>],
  ["Zoom window", <><circle cx="8" cy="5" r="3" {...S} /><path d="M10 7l5 6" {...S} strokeWidth="2" /><path d="M1 9h5v4H1z" {...S} strokeWidth="1.200" /></>],
  null,
  ["Rotate", <><path d="M2 9a6 6 0 0 1 8-6M14 7a6 6 0 0 1-8 6" {...S} strokeWidth="2.400" /><path d="M9 0l4 4-5 2zM7 16l-4-4 5-2z" fill={SLATE} /></>],
  ["Turntable", <><path d="M8 1v14M4 4q-4 4 0 6h9M13 5h-3" fill="none" stroke="#a5adb5" strokeWidth="2" /></>],
  ["Pan", <><path d="M1 3l7 0 4 6-3 5-6-5z" fill="#d08c88" stroke="#c07a78" /><path d="M13 0v6M10 3h6" stroke={SLATE} strokeWidth="1.500" /><circle cx="13" cy="12" r="2.500" fill="#4b6f9e" /></>],
  ["Zoom in and out", <path d="M1 4h7M7 11h8M11 7v8" {...S} strokeWidth="2.400" />],
  null,
  ["Select window", <><path d="M2 2h11v12H2z" fill="none" stroke="#8894a0" strokeDasharray="1.500 1.500" /><path d="M6 3v10l3-2 2 4 1-1-1-4h3z" fill={SLATE} /></>],
  ["Select", <path d="M4 2v11l3-3 2 5 2-1-2-4h4z" fill={SLATE} />],
  ["Show nozzles", <><path d="M2 2l12 12M14 2L2 14" stroke="#2c3a44" strokeWidth="2.500" /><path d="M4 5h8v6H4z" fill="#2c3a44" /><path d="M1 1v14h6" stroke="#1c9a3a" strokeWidth="2" fill="none" /><path d="M15 10v5h-4" stroke={RED} strokeWidth="2" fill="none" /></>],
  null,
  ["Section plane", <><path d="M3 6l6-4 5 2v6l-7 5-4-3z" fill="#fff" stroke={RED} strokeWidth="2" /><path d="M3 6l5 2 6-4M8 8v6" stroke="#8c2020" fill="none" strokeWidth="1.500" /></>],
  ["Transparent", <><rect x="3" y="2" width="11" height="13" rx="4" fill="#f7f7f7" stroke="#aaa" /><path d="M10 6q-5 0-2 3t-2 3M3 5q5 3 11 0" fill="none" stroke="#aaa" /></>],
  ["Cut view", <><path d="M2 2v13M5 4h9v8H5z" {...S} strokeWidth="2" /><path d="M5 8h9" stroke={RED} strokeWidth="2" /></>],
  ["Undo view", <><path d="M14 3H8q-6 0-6 4t6 4h3" fill="none" stroke="#222" strokeWidth="1.800" /><path d="M10 8l4 3-4 4z" fill="#222" /></>],
];

function ToolStrip() {
  return (
    <Tools>
      <ToolGrip />
      {TOOLS.map((tool, i) => tool ? (
        <ToolButton key={i} aria-label={tool[0]}><svg width="15" height="15" viewBox="0 0 16 16">{tool[1]}</svg></ToolButton>
      ) : <ToolRule key={i} />)}
      <svg width="22" height="7" viewBox="0 0 22 7"><path d="M14 0l4 3.500-4 3.500z" fill="#111" /></svg>
    </Tools>
  );
}

/* ---------- page ---------- */

export default function App() {
  return (
    <Window>
      <GlobalStyle />
      <Gradients />
      <TitleBar>
        <Logo>PV</Logo>
        <QuickButton aria-label="Undo"><svg width="15" height="10" viewBox="0 0 15 10"><path d="M3 7q5-6 10-2v4" fill="none" stroke="#999" strokeWidth="3" /><path d="M0 9V2l7 7z" fill="#999" /></svg></QuickButton>
        <QuickButton aria-label="Redo"><svg width="15" height="10" viewBox="0 0 15 10"><path d="M12 7Q7 1 2 5v4" fill="none" stroke="#a5a5a5" strokeWidth="3" /><path d="M15 9V2L8 9z" fill="#a5a5a5" /></svg></QuickButton>
        <QuickButton aria-label="Customize"><svg width="7" height="7" viewBox="0 0 7 7"><path d="M0 0h7v1H0zM0 3h7L3.500 7z" fill="#555" /></svg></QuickButton>
        <Title>PVElite - [C:\Program Files (x86)\Intergraph CAS\PVElite 23\QA\Applchk.pvdb]</Title>
        <WindowButtons>
          <QuickButton aria-label="Minimize"><svg width="12" height="11" viewBox="0 0 12 11"><path d="M1 8h9" stroke="#222" strokeWidth="2" /></svg></QuickButton>
          <QuickButton aria-label="Restore"><svg width="12" height="11" viewBox="0 0 12 11"><path d="M1 5h7v5H1zM4 5V1h7v6H8" fill="none" stroke="#222" strokeWidth="1.500" /></svg></QuickButton>
          <QuickButton aria-label="Close"><svg width="12" height="11" viewBox="0 0 12 11"><path d="M1 1l9 9M10 1l-9 9" stroke="#666" strokeWidth="2" /></svg></QuickButton>
        </WindowButtons>
      </TitleBar>
      <TabBar>
        <MenuTab $kind="file">File</MenuTab>
        <MenuTab $kind="active">Home</MenuTab>
        <MenuTab>Tools</MenuTab>
        <MenuTab>View</MenuTab>
        <MenuTab>3D</MenuTab>
        <MenuTab>Diagnostics</MenuTab>
        <MenuTab>Help</MenuTab>
        <TabBarEnd>
          <EndButton aria-label="Collapse ribbon"><svg width="10" height="8" viewBox="0 0 10 8"><path d="M1 4l4-3 4 3v3L5 5 1 7z" fill="#fff" stroke="#444" /></svg></EndButton>
          <EndButton $wide>Options<SmallCaret /></EndButton>
          <EndButton aria-label="Help">
            <svg width="15" height="15" viewBox="0 0 15 15"><circle cx="7.500" cy="7.500" r="7" fill="#3f6cc8" stroke="#9db4e0" /><text x="7.500" y="11.500" textAnchor="middle" fontSize="11" fontWeight="700" fill="#fff" {...tag}>?</text></svg>
            <svg width="22" height="24" viewBox="0 0 22 24"><path d="M2 6l9-5 2 15-11-8v10l9 5 9-7V8l-9 15M2 18L11 1M2 6l11 10 7-8" fill="none" stroke="#222" strokeWidth="1.100" /></svg>
          </EndButton>
        </TabBarEnd>
      </TabBar>

      <Ribbon>
        <Group $pad="0 4px 0 8px">
          <GroupBody><Big name="New" caret /><Big name="Open..." /><Big name="Save" caret /></GroupBody>
          <GroupLabel>File</GroupLabel>
        </Group>
        <Group><GroupBody><Icons names={ELEMENTS} cols={4} /></GroupBody><GroupLabel>Elements</GroupLabel></Group>
        <Group><GroupBody><Icons names={DETAILS} cols={10} /></GroupBody><GroupLabel>Details</GroupLabel></Group>
        <Group $pad="0 3px">
          <GroupBody><Big name="Input" caret /><Icons names={["Component calculator", "Export drawing"]} cols={1} /></GroupBody>
          <GroupLabel>Input / Output</GroupLabel>
        </Group>
        <Group><GroupBody><Icons names={UTILITY} cols={6} /></GroupBody><GroupLabel>Utility</GroupLabel></Group>
        <Group><GroupBody><Icons names={AUXILIARY} cols={6} /></GroupBody><GroupLabel>Auxiliary</GroupLabel></Group>
        <Group><GroupBody><Icons names={ANALYZE} cols={2} /></GroupBody><GroupLabel>Analyze</GroupLabel></Group>
        <Group $pad="0 4px 0 8px">
          <CodeForm>
            <CodeLabel htmlFor="units">Units :</CodeLabel>
            <SelectBox $framed><Select id="units" /><Caret /></SelectBox>
            <CodeLabel htmlFor="code">Design Code :</CodeLabel>
            <SelectBox $framed><Select id="code" defaultValue="Division 1"><option>Division 1</option></Select><Caret /></SelectBox>
            <CodeLabel htmlFor="class" $off>Div. 2 Class:</CodeLabel>
            <SelectBox $framed $off><Select id="class" disabled /><Caret color="#b9b9bf" /></SelectBox>
          </CodeForm>
          <GroupLabel>Units/Code</GroupLabel>
        </Group>
      </Ribbon>

      <Body>
        <Side>
          <SideHeader>
            <SideTitle>Design Constraints</SideTitle>
            <Grip />
            <QuickButton aria-label="Pin"><svg width="8" height="11" viewBox="0 0 8 11"><path d="M2 0v6M6 0v6M2 .5h4M0 6.500h8M4 6v5" fill="none" stroke="#222" strokeWidth="1.400" /></svg></QuickButton>
          </SideHeader>
          <PropertyFrame>
            <PropertyScroll>
              <TableArea><PropertyTable /></TableArea>
              <Scrollbar>
                <ScrollButton aria-label="Scroll up"><svg width="8" height="5" viewBox="0 0 8 5"><path d="M1 5l3-4 3 4" fill="none" stroke="#444" strokeWidth="1.500" /></svg></ScrollButton>
                <ScrollTrack><Thumb /></ScrollTrack>
                <ScrollButton aria-label="Scroll down"><svg width="8" height="5" viewBox="0 0 8 5"><path d="M1 0l3 4 3-4" fill="none" stroke="#444" strokeWidth="1.500" /></svg></ScrollButton>
              </Scrollbar>
            </PropertyScroll>
            <Description />
          </PropertyFrame>
          <SideTabs>
            {["General I...", "Design C...", "Load Cas...", "Wind Data", "Seismic ...", "Heading"].map((n, i) => <SideTab key={n} $active={i === 1}>{n}</SideTab>)}
          </SideTabs>
        </Side>
        <Main>
          <Viewport><Model /><AxisTriad /></Viewport>
          <ViewTabs>
            <ViewTab>2D View</ViewTab>
            <ViewTab $active>3D View</ViewTab>
            <ViewTab>News Feed</ViewTab>
          </ViewTabs>
        </Main>
        <ToolStrip />
      </Body>

      <StatusBar>
        <StatusMain>No External Pressure Specified</StatusMain>
        <StatusItem>El# 1 of 10</StatusItem>
        <StatusItem>Fr: 0.00 to: 5.00 ft.</StatusItem>
        <StatusItem>Dn</StatusItem>
        <StatusItem>Tr: 0.5300</StatusItem>
        <StatusItem $accent>Mawp: 110.9</StatusItem>
        <StatusItem>MAPnc: 369.5</StatusItem>
        <StatusItem>...</StatusItem>
        <StatusItem>...</StatusItem>
        <StatusItem>SL</StatusItem>
      </StatusBar>
    </Window>
  );
}
